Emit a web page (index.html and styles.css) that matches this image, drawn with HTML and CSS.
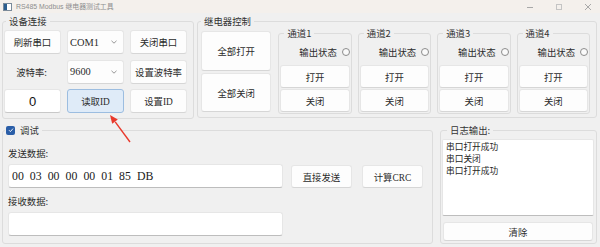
FILE: index.html
```html
<!DOCTYPE html>
<html lang="zh-CN">
<head>
<meta charset="utf-8">
<title>RS485 Modbus 继电器测试工具</title>
<link rel="stylesheet" href="styles.css">
</head>
<body>
<div class="window">
  <div class="titlebar">
    <svg class="appicon" width="9" height="8" viewBox="0 0 9 8"><rect x="0.5" y="0.5" width="8" height="7" fill="#fff" stroke="#7a8a9a"/><rect x="1" y="1" width="3" height="6" fill="#2d5f8f"/></svg>
    <span class="title">RS485 Modbus 继电器测试工具</span>
    <div class="controls">
      <svg width="8" height="8" viewBox="0 0 8 8"><path d="M1 4.5H7" stroke="#a8a8a8" stroke-width="1"/></svg>
      <svg width="8" height="8" viewBox="0 0 8 8"><rect x="1.5" y="1.5" width="5" height="5" fill="none" stroke="#c4c4c4" stroke-width="1"/></svg>
      <svg width="8" height="8" viewBox="0 0 8 8"><path d="M1 1L7 7M7 1L1 7" stroke="#a8a8a8" stroke-width="1"/></svg>
    </div>
  </div>

  <div class="content">
    <div class="row row-top">
      <fieldset class="group g-device">
        <legend>设备连接</legend>
        <div class="device-grid">
          <button class="btn">刷新串口</button>
          <div class="combo"><span>COM1</span><svg width="6" height="4" viewBox="0 0 6 4"><path d="M0.5 0.8L3 3.2L5.5 0.8" fill="none" stroke="#8a8a8a" stroke-width="0.9"/></svg></div>
          <button class="btn">关闭串口</button>
          <div class="label-cell">波特率:</div>
          <div class="combo"><span>9600</span><svg width="6" height="4" viewBox="0 0 6 4"><path d="M0.5 0.8L3 3.2L5.5 0.8" fill="none" stroke="#8a8a8a" stroke-width="0.9"/></svg></div>
          <button class="btn">设置波特率</button>
          <div class="spin">0</div>
          <button class="btn btn-active">读取ID</button>
          <button class="btn">设置ID</button>
        </div>
      </fieldset>

      <fieldset class="group g-relay">
        <legend>继电器控制</legend>
        <div class="relay">
          <div class="all">
            <button class="btn btn-all-open">全部打开</button>
            <button class="btn btn-all-close">全部关闭</button>
          </div>
          <fieldset class="channel">
            <legend>通道1</legend>
            <div class="status">输出状态<span class="radio"></span></div>
            <button class="btn ch-btn">打开</button>
            <button class="btn ch-btn">关闭</button>
          </fieldset>
          <fieldset class="channel">
            <legend>通道2</legend>
            <div class="status">输出状态<span class="radio"></span></div>
            <button class="btn ch-btn">打开</button>
            <button class="btn ch-btn">关闭</button>
          </fieldset>
          <fieldset class="channel">
            <legend>通道3</legend>
            <div class="status">输出状态<span class="radio"></span></div>
            <button class="btn ch-btn">打开</button>
            <button class="btn ch-btn">关闭</button>
          </fieldset>
          <fieldset class="channel">
            <legend>通道4</legend>
            <div class="status">输出状态<span class="radio"></span></div>
            <button class="btn ch-btn">打开</button>
            <button class="btn ch-btn">关闭</button>
          </fieldset>
        </div>
      </fieldset>
    </div>

    <div class="row row-bottom">
      <fieldset class="group g-debug">
        <legend><span class="check"><svg width="8" height="8" viewBox="0 0 8 8"><path d="M2 4.2L3.4 5.6L6 2.6" fill="none" stroke="#fff" stroke-width="0.9"/></svg></span>调试</legend>
        <div class="debug">
          <div class="field-label">发送数据:</div>
          <div class="send-row">
            <div class="input data">00 03 00 00 00 01 85 DB</div>
            <button class="btn btn-send">直接发送</button>
            <button class="btn btn-crc">计算CRC</button>
          </div>
          <div class="field-label second">接收数据:</div>
          <div class="input recv"></div>
        </div>
      </fieldset>

      <fieldset class="group g-log">
        <legend>日志输出:</legend>
        <div class="log">
          <div class="log-text">
            <div class="log-line">串口打开成功</div>
            <div class="log-line">串口关闭</div>
            <div class="log-line">串口打开成功</div>
          </div>
          <button class="btn btn-clear">清除</button>
        </div>
      </fieldset>
    </div>
  </div>

  <svg class="arrow" width="600" height="247" viewBox="0 0 600 247">
    <path d="M130 142L115.2 121.8" stroke="#e8392c" stroke-width="1.4" fill="none"/>
    <path d="M110 115L117.8 119.6L112.2 123.8Z" fill="#e8392c"/>
  </svg>
</div>
</body>
</html>
```

FILE: styles.css
```css
* { box-sizing: border-box; }

html, body {
  margin: 0;
  padding: 0;
}

body {
  width: 600px;
  height: 247px;
  overflow: hidden;
  background: #f0f0f0;
  font-family: "Liberation Serif", "Noto Sans CJK SC", serif;
  font-size: 9.4px;
  color: #2b2b2b;
}

.window {
  position: relative;
  width: 600px;
  height: 247px;
  background: #f0f0f0;
  display: flex;
  flex-direction: column;
}

/* title bar */
.titlebar {
  height: 13px;
  flex: 0 0 13px;
  background: #f4f0ec;
  display: flex;
  align-items: center;
  padding-left: 3px;
}

.appicon { display: block; }

.title {
  margin-left: 4px;
  font-family: "Liberation Sans", "Noto Sans CJK SC", sans-serif;
  font-size: 6.9px;
  line-height: 10px;
  color: #8e8e8e;
}

.controls {
  margin-left: auto;
  display: flex;
  align-items: center;
  gap: 21px;
  padding-right: 8px;
}

.controls svg { display: block; }

/* content */
.content {
  padding: 2px 3px 0 2px;
  display: flex;
  flex-direction: column;
}

.row { display: flex; }

.row-top { gap: 3px; height: 105px; }
.row-bottom { margin-top: 4px; gap: 7px; }

fieldset {
  margin: 0;
  padding: 0;
  min-width: 0;
  border: 1px solid #dcdcdc;
  border-radius: 3px;
}

legend {
  margin-left: 3px;
  padding: 0 3px;
  height: 12px;
  line-height: 12px;
  font-family: "Noto Sans CJK SC", sans-serif;
  font-size: 9.4px;
  color: #333;
}

/* buttons */
.btn {
  margin: 0;
  padding: 0;
  font-family: "Liberation Serif", "Noto Sans CJK SC", serif;
  font-size: 9.4px;
  color: #2b2b2b;
  background: #fdfdfd;
  border: 1px solid #e6e6e6;
  border-bottom-color: #d6d6d6;
  border-radius: 3px;
  display: flex;
  align-items: center;
  justify-content: center;
}

.btn-active {
  background: #dfebf8;
  border-color: #9cbde0;
}

/* device group */
.g-device { width: 192px; height: 104px; }

.device-grid {
  padding: 3px 0 0 1px;
  display: grid;
  grid-template-columns: 57px 57px 57px;
  grid-template-rows: 24px 24px 24px;
  column-gap: 6px;
  row-gap: 5.5px;
}

.combo {
  background: #fdfdfd;
  border: 1px solid #e6e6e6;
  border-bottom-color: #d6d6d6;
  border-radius: 3px;
  display: flex;
  align-items: center;
  justify-content: space-between;
  padding: 0 6px 0 2px;
  font-size: 10.4px;
}

.combo svg { display: block; }

.label-cell {
  display: flex;
  align-items: center;
  justify-content: center;
  font-family: "Noto Sans CJK SC", sans-serif;
  padding-right: 2px;
}

.spin {
  background: #ffffff;
  border: 1px solid #e6e6e6;
  border-bottom-color: #c8c8c8;
  border-radius: 3px;
  display: flex;
  align-items: center;
  justify-content: center;
  font-family: "Liberation Sans", sans-serif;
  font-size: 13px;
  color: #111;
}

/* relay group */
.g-relay { width: 400px; height: 103px; }

.relay {
  display: flex;
  align-items: flex-start;
  padding-left: 3px;
}

.all {
  width: 71px;
  margin-top: 4px;
  margin-right: 7px;
  display: flex;
  flex-direction: column;
  gap: 2px;
}

.btn-all-open { height: 40px; }
.btn-all-close { height: 39px; }

.channel {
  width: 74px;
  margin-right: 6px;
  padding: 0 1px 1px 1px;
}

.channel legend { margin-left: 4px; }

.status {
  height: 26px;
  display: flex;
  align-items: center;
  justify-content: flex-end;
  gap: 5px;
  font-family: "Noto Sans CJK SC", sans-serif;
  padding-right: 0;
}

.radio {
  width: 8px;
  height: 8px;
  border: 1px solid #8c8c8c;
  border-radius: 50%;
  background: #fafafa;
}

.ch-btn { width: 100%; height: 23px; }
.ch-btn + .ch-btn { margin-top: 1px; }

/* debug group */
.g-debug { width: 431px; height: 120px; }

.g-debug legend {
  display: flex;
  align-items: center;
  gap: 5px;
  margin-left: 2px;
  padding: 0 3px 0 1px;
}

.check {
  width: 9px;
  height: 9px;
  border-radius: 2px;
  background: #2a5ea8;
  display: flex;
  align-items: center;
  justify-content: center;
}

.check svg { display: block; }

.debug { padding: 0 0 0 5px; }

.field-label {
  margin-top: 11px;
  height: 12px;
  line-height: 12px;
  font-family: "Noto Sans CJK SC", sans-serif;
}

.field-label.second { margin-top: 7px; }

.send-row {
  margin-top: 5px;
  display: flex;
  align-items: flex-start;
}

.input {
  width: 275px;
  height: 24px;
  background: #ffffff;
  border: 1px solid #e6e6e6;
  border-bottom-color: #bdbdbd;
  border-radius: 3px;
}

.data {
  display: flex;
  align-items: center;
  padding-left: 3px;
  font-family: "Liberation Serif", serif;
  font-size: 11.8px;
  word-spacing: 3.1px;
  color: #1a1a1a;
}

.btn-send { width: 61px; height: 23px; margin-top: 1px; margin-left: 8px; }
.btn-crc { width: 61px; height: 23px; margin-top: 1px; margin-left: 10px; }

.recv { margin-top: 5px; }

/* log group */
.g-log { width: 157px; height: 120px; }

.g-log legend { margin-left: 6px; }

.log { padding: 3px 0 0 1px; }

.log-text {
  width: 152px;
  height: 77px;
  background: #ffffff;
  border: 1px solid #e6e6e6;
  border-bottom-color: #bdbdbd;
  border-radius: 2px;
  padding: 1px 0 0 3px;
  font-family: "Noto Sans CJK SC", sans-serif;
  color: #1e1e1e;
}

.log-line {
  font-size: 8.7px;
  line-height: 12.6px;
  height: 12px;
}

.btn-clear {
  width: 150px;
  height: 19px;
  margin-top: 6px;
  margin-left: 1px;
}

/* annotation arrow */
.arrow {
  position: absolute;
  left: 0;
  top: 0;
  pointer-events: none;
}
```
